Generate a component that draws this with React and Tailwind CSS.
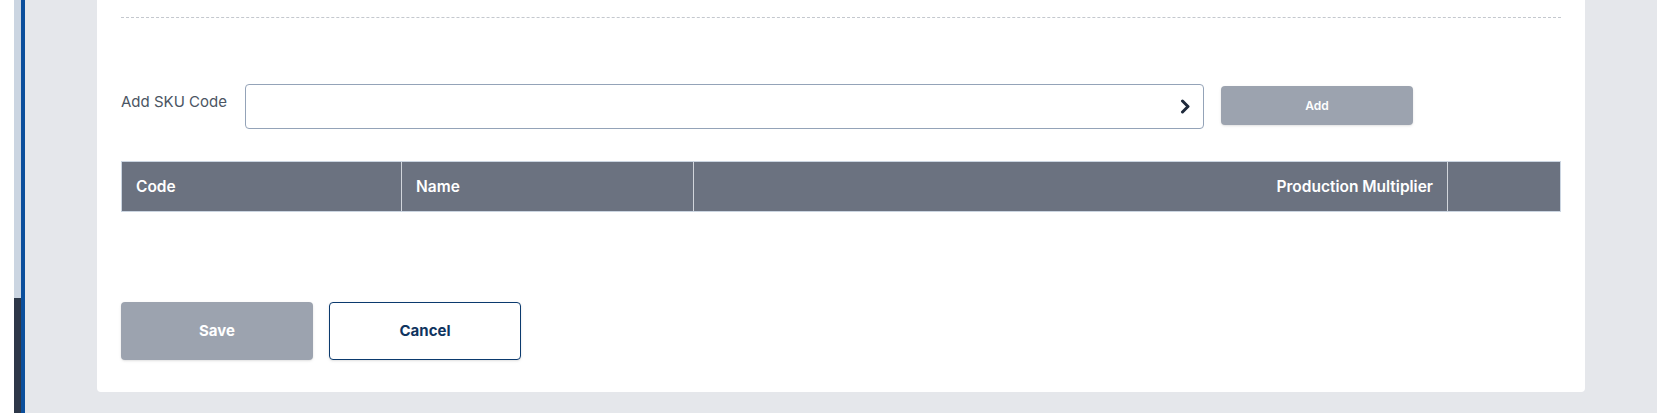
import React from "react";

export default function App() {
  return (
    <div
      className="flex h-[413px] w-[1657px] overflow-hidden bg-[#e5e7eb]"
      style={{ fontFamily: "Inter, 'Liberation Sans', sans-serif" }}
    >
      {/* left sidebar edge */}
      <div className="w-[14px] shrink-0 bg-white" />
      <div className="flex w-[7px] shrink-0 flex-col">
        <div className="h-[298px] bg-[#cbd5e1]" />
        <div className="flex-1 bg-[#2d3748]" />
      </div>
      <div className="w-[4px] shrink-0 bg-[#0b4f9c]" />

      {/* main */}
      <div className="flex-1 px-[72px]">
        <div className="rounded-b-[4px] bg-white px-6 pb-8 pt-[17px]">
          <div className="border-t border-dashed border-[#c4c8ce]" />

          {/* SKU row */}
          <div className="mt-[66px] flex items-start">
            <label className="mt-[9px] w-[124px] shrink-0 text-[15px] leading-[18px] text-[#4b5563]">
              Add SKU Code
            </label>
            <div className="flex h-[45px] w-[959px] shrink-0 items-center justify-end rounded-[4px] border border-[#94a3b8] bg-white pr-[12px]">
              <svg width="11" height="15" viewBox="0 0 11 15" fill="none">
                <path
                  d="M2.5 2 L8 7.5 L2.5 13"
                  stroke="#1e293b"
                  strokeWidth="3"
                  strokeLinecap="round"
                  strokeLinejoin="round"
                />
              </svg>
            </div>
            <button className="ml-[17px] mt-[2px] h-[39px] w-[192px] shrink-0 rounded-[4px] bg-[#9ca3af] text-[12px] font-semibold text-white shadow-sm">
              Add
            </button>
          </div>

          {/* table header */}
          <div className="mt-[32px] flex h-[51px] border border-[#cbd5e1] bg-[#6b7280] text-[15.5px] font-semibold text-white">
            <div className="flex w-[280px] items-center border-r border-[#d1d5db] px-[14px]">
              Code
            </div>
            <div className="flex w-[292px] items-center border-r border-[#d1d5db] px-[14px]">
              Name
            </div>
            <div className="flex flex-1 items-center justify-end border-r border-[#d1d5db] px-[14px]">
              Production Multiplier
            </div>
            <div className="w-[112px]" />
          </div>

          {/* buttons */}
          <div className="mt-[90px] flex gap-4">
            <button className="h-[58px] w-[192px] rounded-[4px] bg-[#9ca3af] text-[15px] font-bold text-white shadow-sm">
              Save
            </button>
            <button className="h-[58px] w-[192px] rounded-[4px] border border-[#0b3a6e] bg-white text-[15px] font-bold text-[#0f3460] shadow-sm">
              Cancel
            </button>
          </div>
        </div>
      </div>
    </div>
  );
}
